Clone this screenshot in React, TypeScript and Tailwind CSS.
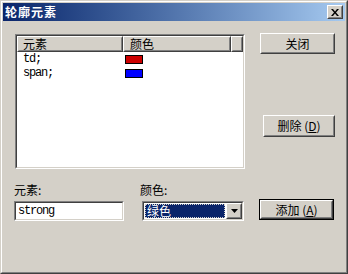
import React from "react";

const cjk = { fontFamily: '"Noto Sans CJK SC", "Noto Sans", sans-serif' };
const mono = { fontFamily: '"Liberation Mono", "DejaVu Sans Mono", monospace' };

// classic raised 3d frame
const Raised = ({ className = "", children }: { className?: string; children?: React.ReactNode }) => (
  <div className={`border border-t-white border-l-white border-r-[#404040] border-b-[#404040] ${className}`}>
    <div className="w-full h-full border border-t-[#d4d0c8] border-l-[#d4d0c8] border-r-[#808080] border-b-[#808080] bg-[#d4d0c8] flex items-center justify-center">
      {children}
    </div>
  </div>
);

// classic sunken field frame
const Sunken = ({ className = "", children }: { className?: string; children?: React.ReactNode }) => (
  <div className={`border border-t-[#808080] border-l-[#808080] border-r-white border-b-white ${className}`}>
    <div className="w-full h-full border border-t-[#404040] border-l-[#404040] border-r-[#d4d0c8] border-b-[#d4d0c8] bg-white flex">
      {children}
    </div>
  </div>
);

const rows = [
  { name: "td;", color: "bg-[#cc0000]" },
  { name: "span;", color: "bg-[#0000ff]" },
];

export default function App() {
  return (
    <div className="w-[348px] h-[274px] border border-t-[#d4d0c8] border-l-[#d4d0c8] border-r-[#404040] border-b-[#404040]" style={cjk}>
      <div className="w-full h-full border border-t-white border-l-white border-r-[#808080] border-b-[#808080] bg-[#d4d0c8] p-[1px] flex flex-col">
        {/* Title bar */}
        <div className="h-[18px] flex items-center bg-gradient-to-r from-[#0a246a] to-[#a6caf0] pl-[2px] pr-[2px]">
          <span className="text-white text-[12px] font-bold tracking-[1px] leading-none">轮廓元素</span>
          <Raised className="ml-auto w-[16px] h-[14px]">
            <svg width="8" height="7" viewBox="0 0 8 7">
              <path d="M0 0h2l2 2.5L6 0h2L5 3.5 8 7H6L4 4.5 2 7H0l3-3.5z" fill="#000" />
            </svg>
          </Raised>
        </div>

        {/* Top: list + buttons */}
        <div className="flex items-start mt-[12px] pl-[12px]">
          <Sunken className="mt-[1px] w-[230px] h-[135px]">
            <div className="flex flex-col w-full">
              <div className="flex h-[16px]">
                <Raised className="w-[106px] h-[16px]">
                  <span className="w-full pl-[4px] text-[12px] leading-none text-black">元素</span>
                </Raised>
                <Raised className="w-[108px] h-[16px]">
                  <span className="w-full pl-[5px] text-[12px] leading-none text-black">颜色</span>
                </Raised>
                <Raised className="flex-1 h-[16px]" />
              </div>
              {rows.map((r) => (
                <div key={r.name} className="flex items-center h-[14px]">
                  <span className="w-[108px] pl-[6px] text-[12px] tracking-[-1.2px] leading-none text-black" style={mono}>
                    {r.name}
                  </span>
                  <div className={`w-[18px] h-[9px] border border-black ${r.color}`} />
                </div>
              ))}
            </div>
          </Sunken>

          <div className="ml-[15px] flex flex-col">
            <Raised className="w-[75px] h-[21px]">
              <span className="text-[12px] leading-none text-black">关闭</span>
            </Raised>
            <Raised className="mt-[61px] ml-[3px] w-[72px] h-[22px]">
              <span className="text-[12px] leading-none text-black">
                删除 (<span className="underline">D</span>)
              </span>
            </Raised>
          </div>
        </div>

        {/* Bottom: fields + add */}
        <div className="flex items-start mt-[14px] pl-[11px]">
          <div className="flex flex-col w-[110px]">
            <span className="h-[14px] text-[12px] leading-[14px] text-black">元素:</span>
            <Sunken className="mt-[4px] w-[110px] h-[20px]">
              <span className="self-center pl-[2px] text-[12px] tracking-[-1.2px] leading-none text-black" style={mono}>
                strong
              </span>
            </Sunken>
          </div>

          <div className="flex flex-col ml-[18px]">
            <span className="h-[14px] text-[12px] leading-[14px] text-black -ml-[2px]">颜色:</span>
            <Sunken className="mt-[4px] w-[102px] h-[20px]">
              <div className="flex-1 p-[1px] flex">
                <div className="flex-1 bg-[#0a246a] border border-dotted border-[#d4d0c8] flex items-center">
                  <span className="text-white text-[12px] leading-none pl-[1px]">绿色</span>
                </div>
              </div>
              <Raised className="w-[16px] h-[16px]">
                <svg width="7" height="4" viewBox="0 0 7 4">
                  <path d="M0 0h7L3.5 4z" fill="#000" />
                </svg>
              </Raised>
            </Sunken>
          </div>

          <div className="ml-[15px] mt-[16px] border border-black">
            <Raised className="w-[73px] h-[19px]">
              <span className="text-[12px] leading-none text-black">
                添加 (<span className="underline">A</span>)
              </span>
            </Raised>
          </div>
        </div>
      </div>
    </div>
  );
}
